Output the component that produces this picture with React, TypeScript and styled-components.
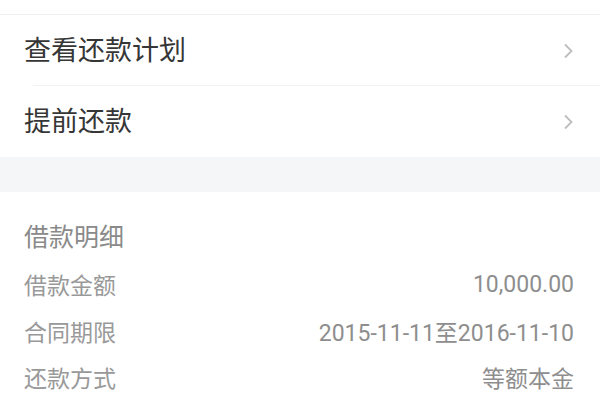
import React from "react";
import styled, { createGlobalStyle } from "styled-components";

const Global = createGlobalStyle`
  html, body { margin: 0; padding: 0; background: #ffffff; }
  body { font-family: Roboto, "Noto Sans CJK SC", sans-serif; }
`;

const Page = styled.div`
  width: 600px;
  height: 400px;
  overflow: hidden;
  background: #ffffff;
  display: flex;
  flex-direction: column;
`;

const TopStrip = styled.div`
  height: 14px;
  flex: none;
  background: #ffffff;
  border-bottom: 1px solid #f0f0f2;
`;

const MenuGroup = styled.div`
  background: #ffffff;
  display: flex;
  flex-direction: column;
  flex: none;
`;

const MenuRow = styled.div<{ $divider?: boolean }>`
  height: 71px;
  display: flex;
  align-items: center;
  justify-content: space-between;
  padding: 0 26px 0 24px;
  position: relative;
  ${(p) =>
    p.$divider
      ? `&::after { content: ""; position: absolute; left: 33px; right: 0; bottom: 0; height: 1px; background: #f2f2f4; }`
      : ""}
`;

const MenuLabel = styled.span`
  font-size: 27px;
  color: #363636;
  line-height: 36px;
`;

const Chevron = styled.svg`
  width: 11px;
  height: 16px;
`;

const Gap = styled.div`
  height: 35px;
  flex: none;
  background: #f5f6f8;
`;

const Detail = styled.div`
  display: flex;
  flex-direction: column;
  padding: 29px 26px 0 24px;
`;

const DetailTitle = styled.div`
  font-size: 25px;
  color: #8a8a8a;
  line-height: 34px;
  margin-bottom: 6px;
`;

const DetailRow = styled.div`
  display: flex;
  justify-content: space-between;
  align-items: center;
  height: 46.5px;
  font-size: 23px;
  color: #999999;
`;

const Value = styled.span`
  color: #8e8e8e;
`;

const ChevronIcon = () => (
  <Chevron viewBox="0 0 11 16">
    <path d="M2 1.5 L8.5 8 L2 14.5" fill="none" stroke="#bdbdbd" strokeWidth="1.8" />
  </Chevron>
);

export default function App() {
  return (
    <Page>
      <Global />
      <TopStrip />
      <MenuGroup>
        <MenuRow $divider>
          <MenuLabel>查看还款计划</MenuLabel>
          <ChevronIcon />
        </MenuRow>
        <MenuRow>
          <MenuLabel>提前还款</MenuLabel>
          <ChevronIcon />
        </MenuRow>
      </MenuGroup>
      <Gap />
      <Detail>
        <DetailTitle>借款明细</DetailTitle>
        <DetailRow>
          <span>借款金额</span>
          <Value>10,000.00</Value>
        </DetailRow>
        <DetailRow>
          <span>合同期限</span>
          <Value>2015-11-11至2016-11-10</Value>
        </DetailRow>
        <DetailRow>
          <span>还款方式</span>
          <Value>等额本金</Value>
        </DetailRow>
      </Detail>
    </Page>
  );
}
